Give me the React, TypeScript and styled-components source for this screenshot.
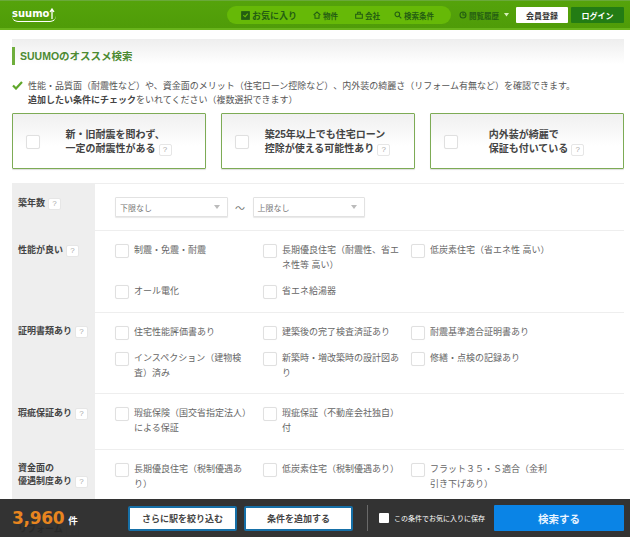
import React from 'react';
import styled, { createGlobalStyle } from 'styled-components';

const Global = createGlobalStyle`
  html, body { margin: 0; padding: 0; background: #fff; }
  body {
    font-family: "Liberation Sans", "Noto Sans CJK JP", sans-serif;
    color: #555;
    font-size: 9px;
    text-spacing-trim: space-all;
  }
  * { box-sizing: border-box; }
`;

const Page = styled.div`
  position: relative;
  width: 630px;
  height: 542px;
  overflow: hidden;
  background: #fff;
`;

const Header = styled.header`
  height: 30px;
  padding: 1px 6px 0 12px;
  display: flex;
  align-items: center;
  background: linear-gradient(#55a30b, #4f9c08);
  border-top: 1px solid #6aa93a;
  border-bottom: 2px solid #69b41c;
`;

const Logo = styled.div`
  width: 44px;
  display: flex;
  align-items: flex-start;
  color: #fff;
  font: bold 10px/12px "DejaVu Sans", sans-serif;
  border-bottom: 1px solid #fff;
  border-radius: 0 0 6px 6px;
  padding-bottom: 1px;
  margin-top: -1px;
  height: 14px;
`;

const Nav = styled.nav`
  margin-left: 171px;
  width: 224px;
  height: 18px;
  border-radius: 9px;
  background: #66b907;
  display: flex;
  align-items: center;
  padding-left: 14px;
  color: #245e12;
  font-weight: bold;
`;

const NavItem = styled.span<{ $w: number; $big?: boolean }>`
  width: ${(p) => p.$w}px;
  display: flex;
  align-items: center;
  gap: 2px;
  font-size: ${(p) => (p.$big ? 9 : 7.5)}px;
  white-space: nowrap;
`;

const History = styled.span`
  margin-left: 8px;
  width: 57px;
  display: flex;
  align-items: center;
  gap: 2px;
  color: #245e12;
  font-size: 7.5px;
  font-weight: bold;
  white-space: nowrap;
`;

const HeadBtn = styled.button<{ $primary?: boolean }>`
  width: ${(p) => (p.$primary ? 53 : 52)}px;
  height: 16px;
  margin-left: ${(p) => (p.$primary ? 3 : 0)}px;
  border: 0;
  padding: 0;
  border-radius: 1px;
  background: ${(p) => (p.$primary ? '#237c14' : '#fff')};
  color: ${(p) => (p.$primary ? '#fff' : '#333')};
  font: bold 8px "Liberation Sans", "Noto Sans CJK JP", sans-serif;
`;

const Content = styled.main`
  margin: 9px 6px 0 12px;
  height: 498px;
  overflow: hidden;
`;

const TitleBand = styled.div`
  height: 36px;
  padding-top: 8px;
  background: linear-gradient(#eeeeee, #ffffff 70%);
`;

const Title = styled.h2`
  margin: 0;
  height: 18px;
  border-left: 3px solid #6fae3c;
  padding-left: 5px;
  color: #4c8a32;
  font-size: 10.5px;
  line-height: 18px;
  font-weight: bold;
`;

const Intro = styled.div`
  margin-top: 4px;
  display: flex;
  gap: 5px;
  font-size: 9px;
  line-height: 14px;
  svg { margin-top: 2px; flex: none; }
`;

const Strong = styled.b`
  color: #444;
`;

const Picks = styled.div`
  margin-top: 6px;
  display: grid;
  grid-template-columns: repeat(3, 194px);
  column-gap: 15px;
`;

const Pick = styled.div`
  height: 56px;
  border: 1px solid #7dab55;
  border-radius: 1px;
  background: linear-gradient(#f0f0f0, #ffffff 60%);
  box-shadow: 0 1px 1px #ddd;
  display: flex;
  align-items: center;
  padding: 1px 8px 0 13px;
`;

const Box = styled.span`
  flex: none;
  width: 14px;
  height: 14px;
  background: #fff;
  border: 1px solid #e0e0e0;
  border-radius: 2px;
  box-shadow: 0 0 1px #eee;
`;

const PickText = styled.div`
  flex: 1;
  display: flex;
  justify-content: center;
  color: #444;
  font-size: 10px;
  line-height: 14px;
  font-weight: bold;
  white-space: nowrap;
`;

const Help = styled.span`
  display: inline-block;
  width: 13px;
  height: 12px;
  margin-left: 3px;
  vertical-align: 0;
  border: 1px solid #e6e6e6;
  border-radius: 2px;
  background: #fff;
  color: #aaa;
  font: 8px/10px "Liberation Sans", sans-serif;
  text-align: center;
`;

const Table = styled.div`
  margin-top: 14px;
`;

const Row = styled.section`
  display: grid;
  grid-template-columns: 83px 1fr;
  border-top: 1px solid #eeeeee;
`;

const RowHead = styled.div`
  background: #eeeeee;
  padding: 12.5px 4px 0 6px;
  color: #444;
  font-size: 9px;
  line-height: 13px;
  font-weight: bold;
`;

const RowBody = styled.div<{ $tail?: boolean }>`
  padding: 13px 0 ${(p) => (p.$tail ? 18 : 12.5)}px 20px;
  display: grid;
  grid-template-columns: repeat(3, 148px);
  row-gap: 12px;
  align-content: start;
`;

const SelectBody = styled.div`
  height: 46px;
  padding-left: 20px;
  display: flex;
  align-items: center;
  color: #777;
`;

const Select = styled.div`
  width: 112.5px;
  height: 20px;
  border: 1px solid #e2e2e2;
  border-radius: 1px;
  box-shadow: 0 1px 1px #e8e8e8;
  background: #fff;
  padding: 0 7px 0 4px;
  display: flex;
  justify-content: space-between;
  align-items: center;
  font-size: 8px;
  color: #777;
`;

const Caret = styled.span`
  width: 0;
  height: 0;
  border-left: 3px solid transparent;
  border-right: 3px solid transparent;
  border-top: 4px solid #bbb;
`;

const Tilde = styled.span`
  width: 25px;
  text-align: center;
  font-size: 10px;
`;

const Option = styled.label`
  display: flex;
  gap: 5px;
  font-size: 9px;
  line-height: 15px;
  color: #666;
`;

const OptionText = styled.span`
  width: 121px;
  margin-top: -1px;
`;

const Footer = styled.footer`
  position: absolute;
  left: 0;
  right: 0;
  top: 499px;
  height: 38px;
  background: rgba(40, 40, 40, 0.95);
  display: flex;
  align-items: center;
  padding: 0 6px 0 12px;
`;

const Count = styled.div`
  width: 116px;
  color: #e8851f;
  font: bold 17px/38px "DejaVu Sans", sans-serif;
  white-space: nowrap;
  letter-spacing: -0.3px;
`;

const Unit = styled.span`
  margin-left: 4px;
  color: #fff;
  font: bold 9.5px "Liberation Sans", "Noto Sans CJK JP", sans-serif;
`;

const GhostBtn = styled.button<{ $w: number }>`
  width: ${(p) => p.$w}px;
  height: 25px;
  margin-right: 7px;
  padding: 0;
  background: #fff;
  border: 2px solid #1670a8;
  border-radius: 2px;
  color: #444;
  font: bold 9px "Liberation Sans", "Noto Sans CJK JP", sans-serif;
`;

const Divider = styled.span`
  width: 1px;
  height: 26px;
  margin: 0 11px 0 7px;
  background: #6a6a6a;
`;

const SaveBox = styled.span`
  width: 10px;
  height: 10px;
  background: #fff;
  border-radius: 1px;
`;

const SaveLabel = styled.span`
  margin-left: 5px;
  width: 100px;
  color: #fff;
  font-size: 7px;
  white-space: nowrap;
`;

const SearchBtn = styled.button`
  width: 130px;
  height: 26px;
  border: 0;
  padding: 0;
  border-radius: 1px;
  background: #0a84e6;
  color: #e9f4ff;
  font: bold 10.5px "Liberation Sans", "Noto Sans CJK JP", sans-serif;
`;

const ColorIcon = ({ children, size = 8 }: { children: React.ReactNode; size?: number }) => (
  <svg width={size} height={size} viewBox="0 0 12 12" fill="none" stroke="#245e12" strokeWidth="1.6">
    {children}
  </svg>
);

const Opt = ({ children }: { children: React.ReactNode }) => (
  <Option>
    <Box />
    <OptionText>{children}</OptionText>
  </Option>
);

export default function App() {
  return (
    <Page>
      <Global />
      <Header>
        <Logo>
          suumo
          <svg width="6" height="11" viewBox="0 0 6 11" fill="none" stroke="#fff" strokeWidth="1.3">
            <path d="M3 11V2M1 4l2-3 2 3" />
          </svg>
        </Logo>
        <Nav>
          <NavItem $w={72} $big>
            <ColorIcon size={9}>
              <rect x="1" y="1" width="10" height="10" fill="#245e12" />
              <path d="M3 5.5l2.5 2L9 3.5" stroke="#66b907" />
            </ColorIcon>
            お気に入り
          </NavItem>
          <NavItem $w={42}>
            <ColorIcon>
              <path d="M1 6l5-4.5L11 6M3 6v5h6V6" />
            </ColorIcon>
            物件
          </NavItem>
          <NavItem $w={39}>
            <ColorIcon>
              <path d="M1 5h10v6H1zM4 5V2h4v3" />
            </ColorIcon>
            会社
          </NavItem>
          <NavItem $w={50}>
            <ColorIcon>
              <circle cx="5" cy="5" r="3.5" />
              <path d="M8 8l3 3" />
            </ColorIcon>
            検索条件
          </NavItem>
        </Nav>
        <History>
          <ColorIcon>
            <circle cx="6" cy="6" r="4.5" />
            <path d="M6 2v4h4" />
          </ColorIcon>
          閲覧履歴
          <svg width="5" height="4" viewBox="0 0 5 4" style={{ marginLeft: 3 }}>
            <path d="M0 0h5L2.5 3.5z" fill="#d6eeb8" />
          </svg>
        </History>
        <HeadBtn>会員登録</HeadBtn>
        <HeadBtn $primary>ログイン</HeadBtn>
      </Header>

      <Content>
        <TitleBand>
          <Title>SUUMOのオススメ検索</Title>
        </TitleBand>
        <Intro>
          <svg width="11" height="9" viewBox="0 0 11 9" fill="none" stroke="#5fa72a" strokeWidth="2.2">
            <path d="M1 4.5l3 3 6-6.5" />
          </svg>
          <div>
            性能・品質面（耐震性など）や、資金面のメリット（住宅ローン控除など）、内外装の綺麗さ（リフォーム有無など）を確認できます。
            <br />
            <Strong>追加したい条件にチェック</Strong>をいれてください（複数選択できます）
          </div>
        </Intro>

        <Picks>
          <Pick>
            <Box />
            <PickText>
              <div>
                新・旧耐震を問わず、
                <br />
                一定の耐震性がある<Help>?</Help>
              </div>
            </PickText>
          </Pick>
          <Pick>
            <Box />
            <PickText>
              <div>
                築25年以上でも住宅ローン
                <br />
                控除が使える可能性あり<Help>?</Help>
              </div>
            </PickText>
          </Pick>
          <Pick>
            <Box />
            <PickText>
              <div>
                内外装が綺麗で
                <br />
                保証も付いている<Help>?</Help>
              </div>
            </PickText>
          </Pick>
        </Picks>

        <Table>
          <Row>
            <RowHead>
              築年数<Help>?</Help>
            </RowHead>
            <SelectBody>
              <Select>
                下限なし
                <Caret />
              </Select>
              <Tilde>～</Tilde>
              <Select>
                上限なし
                <Caret />
              </Select>
            </SelectBody>
          </Row>
          <Row>
            <RowHead>
              性能が良い<Help>?</Help>
            </RowHead>
            <RowBody>
              <Opt>制震・免震・耐震</Opt>
              <Opt>長期優良住宅（耐震性、省エネ性等 高い）</Opt>
              <Opt>低炭素住宅（省エネ性 高い）</Opt>
              <Opt>オール電化</Opt>
              <Opt>省エネ給湯器</Opt>
            </RowBody>
          </Row>
          <Row>
            <RowHead>
              証明書類あり<Help>?</Help>
            </RowHead>
            <RowBody>
              <Opt>住宅性能評価書あり</Opt>
              <Opt>建築後の完了検査済証あり</Opt>
              <Opt>耐震基準適合証明書あり</Opt>
              <Opt>インスペクション（建物検査）済み</Opt>
              <Opt>新築時・増改築時の設計図あり</Opt>
              <Opt>修繕・点検の記録あり</Opt>
            </RowBody>
          </Row>
          <Row>
            <RowHead>
              瑕疵保証あり<Help>?</Help>
            </RowHead>
            <RowBody>
              <Opt>瑕疵保険（国交省指定法人）による保証</Opt>
              <Opt>瑕疵保証（不動産会社独自）付</Opt>
            </RowBody>
          </Row>
          <Row>
            <RowHead>
              資金面の
              <br />
              優遇制度あり<Help>?</Help>
            </RowHead>
            <RowBody $tail>
              <Opt>長期優良住宅（税制優遇あり）</Opt>
              <Opt>低炭素住宅（税制優遇あり）</Opt>
              <Opt>フラット３５・Ｓ適合（金利引き下げあり）</Opt>
            </RowBody>
          </Row>
          <Row>
            <RowHead>
              リフォーム<Help>?</Help>
            </RowHead>
          </Row>
        </Table>
      </Content>

      <Footer>
        <Count>
          3,960<Unit>件</Unit>
        </Count>
        <GhostBtn $w={109}>さらに駅を絞り込む</GhostBtn>
        <GhostBtn $w={109}>条件を追加する</GhostBtn>
        <Divider />
        <SaveBox />
        <SaveLabel>この条件でお気に入りに保存</SaveLabel>
        <SearchBtn>検索する</SearchBtn>
      </Footer>
    </Page>
  );
}
